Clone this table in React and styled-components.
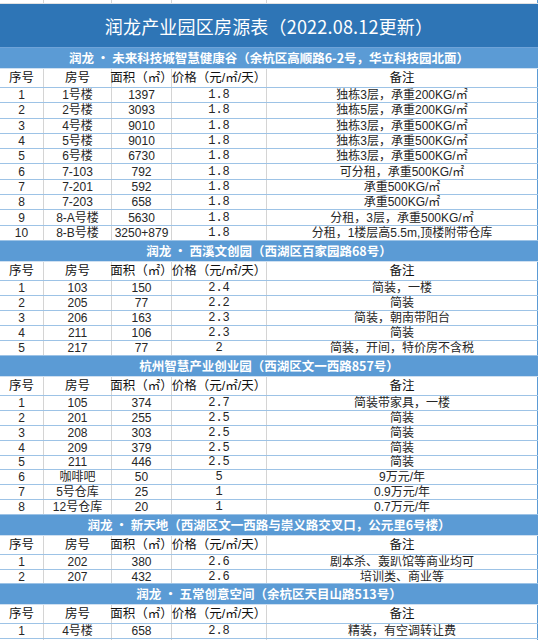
import React from "react";
import styled, { createGlobalStyle } from "styled-components";

const GlobalStyle = createGlobalStyle`
  body {
    margin: 0;
    background: #ffffff;
    font-family: "Noto Sans CJK SC", "Noto Sans", sans-serif;
  }
`;

const COLS = "44px 68px 60px 95px 1fr";

const sections = [
  {
    name: "润龙 · 未来科技城智慧健康谷（余杭区高顺路6-2号，华立科技园北面）",
    rowH: 15.3,
    rows: [
      ["1", "1号楼", "1397", "1.8", "独栋3层，承重200KG/㎡"],
      ["2", "2号楼", "3093", "1.8", "独栋5层，承重200KG/㎡"],
      ["3", "4号楼", "9010", "1.8", "独栋3层，承重500KG/㎡"],
      ["4", "5号楼", "9010", "1.8", "独栋3层，承重500KG/㎡"],
      ["5", "6号楼", "6730", "1.8", "独栋3层，承重500KG/㎡"],
      ["6", "7-103", "792", "1.8", "可分租，承重500KG/㎡"],
      ["7", "7-201", "592", "1.8", "承重500KG/㎡"],
      ["8", "7-203", "658", "1.8", "承重500KG/㎡"],
      ["9", "8-A号楼", "5630", "1.8", "分租，3层，承重500KG/㎡"],
      ["10", "8-B号楼", "3250+879", "1.8", "分租，1楼层高5.5m,顶楼附带仓库"],
    ],
  },
  {
    name: "润龙 · 西溪文创园（西湖区百家园路68号）",
    rowH: 15,
    rows: [
      ["1", "103", "150", "2.4", "简装，一楼"],
      ["2", "205", "77", "2.2", "简装"],
      ["3", "206", "163", "2.3", "简装，朝南带阳台"],
      ["4", "211", "106", "2.3", "简装"],
      ["5", "217", "77", "2", "简装，开间，特价房不含税"],
    ],
  },
  {
    name: "杭州智慧产业创业园（西湖区文一西路857号）",
    rowH: 14.9,
    rows: [
      ["1", "105", "374", "2.7", "简装带家具，一楼"],
      ["2", "201", "255", "2.5", "简装"],
      ["3", "208", "303", "2.5", "简装"],
      ["4", "209", "379", "2.5", "简装"],
      ["5", "211", "446", "2.5", "简装"],
      ["6", "咖啡吧", "50", "5", "9万元/年"],
      ["7", "5号仓库", "25", "1", "0.9万元/年"],
      ["8", "12号仓库", "20", "1", "0.7万元/年"],
    ],
  },
  {
    name: "润龙 · 新天地（西湖区文一西路与崇义路交叉口，公元里6号楼）",
    rowH: 14.7,
    rows: [
      ["1", "202", "380", "2.6", "剧本杀、轰趴馆等商业均可"],
      ["2", "207", "432", "2.6", "培训类、商业等"],
    ],
  },
  {
    name: "润龙 · 五常创意空间（余杭区天目山路513号）",
    rowH: 15,
    rows: [["1", "4号楼", "658", "2.8", "精装，有空调转让费"]],
  },
];

const headers = ["序号", "房号", "面积（㎡）", "价格（元/㎡/天）", "备注"];

export default function App() {
  return (
    <>
      <GlobalStyle />
      <Sheet>
        <Row $h={4} $plain>
          {headers.map((h) => (
            <Cell key={h} />
          ))}
        </Row>
        <Title>润龙产业园区房源表（2022.08.12更新）</Title>
        {sections.map((s) => (
          <React.Fragment key={s.name}>
            <SubHeader>{s.name}</SubHeader>
            <Row $h={19}>
              {headers.map((h) => (
                <HeadCell key={h}>{h}</HeadCell>
              ))}
            </Row>
            {s.rows.map((r) => (
              <Row key={r[0]} $h={s.rowH}>
                <Cell>{r[0]}</Cell>
                <Cell>{r[1]}</Cell>
                <Cell>{r[2]}</Cell>
                <Cell $mono>{r[3]}</Cell>
                <Cell>{r[4]}</Cell>
              </Row>
            ))}
          </React.Fragment>
        ))}
        <Row $h={6} $plain>
          {headers.map((h) => (
            <Cell key={h} />
          ))}
        </Row>
      </Sheet>
    </>
  );
}

const Sheet = styled.div`
  width: 538px;
  overflow: hidden;
`;

const Title = styled.div`
  height: 44px;
  box-sizing: border-box;
  display: flex;
  align-items: center;
  justify-content: center;
  background: #2e75b6;
  border-bottom: 1px solid #6fa3d8;
  color: #ffffff;
  font-size: 18px;
  line-height: 1;
  letter-spacing: 0.2px;
`;

const SubHeader = styled.div`
  height: 21px;
  box-sizing: border-box;
  display: flex;
  align-items: center;
  justify-content: center;
  background: #5b9bd5;
  border-bottom: 1px solid #cfe0f1;
  color: #ffffff;
  font-size: 12.5px;
  font-weight: 700;
  line-height: 1;
  white-space: nowrap;
`;

const Row = styled.div`
  display: grid;
  grid-template-columns: ${COLS};
  height: ${(p) => p.$h}px;
  box-sizing: border-box;
  border-bottom: 1px solid ${(p) => (p.$plain ? "#e2e2e2" : "#9dc3e6")};
  background: #ffffff;
`;

const Cell = styled.div`
  display: flex;
  align-items: center;
  justify-content: center;
  white-space: nowrap;
  border-right: 1px solid #d4d4d4;
  color: #262626;
  font-size: 12px;
  line-height: 1;
  font-family: ${(p) =>
    p.$mono
      ? `"Liberation Mono", "Noto Sans CJK SC", monospace`
      : `"Liberation Sans", "Noto Sans CJK SC", sans-serif`};

  &:last-child {
    border-right-color: #5b9bd5;
  }
`;

const HeadCell = styled(Cell)`
  color: #111111;
  font-size: 12.5px;
`;
